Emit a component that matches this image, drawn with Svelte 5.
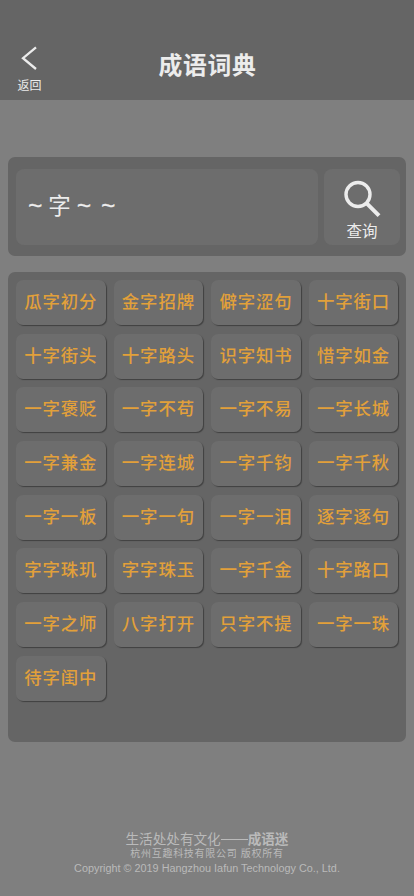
<script>
  let query = $state('~ 字 ~  ~')

  const idioms = [
    '瓜字初分', '金字招牌', '僻字涩句', '十字街口',
    '十字街头', '十字路头', '识字知书', '惜字如金',
    '一字褒贬', '一字不苟', '一字不易', '一字长城',
    '一字兼金', '一字连城', '一字千钧', '一字千秋',
    '一字一板', '一字一句', '一字一泪', '逐字逐句',
    '字字珠玑', '字字珠玉', '一字千金', '十字路口',
    '一字之师', '八字打开', '只字不提', '一字一珠',
    '待字闺中',
  ]
</script>

<div class="page">
  <header>
    <button class="back">
      <svg width="16" height="24" viewBox="0 0 16 24">
        <path d="M15 1.3 2 12.2 15 23" fill="none" stroke="currentColor" stroke-width="2.3" />
      </svg>
      <span>返回</span>
    </button>
    <h1>成语词典</h1>
  </header>

  <main>
    <section class="search">
      <div class="field">
        {#each query.split(/\s+/) as ch}
          <span class:tilde={ch === '~'}>{ch}</span>
        {/each}
      </div>
      <button class="submit">
        <svg width="38" height="38" viewBox="0 0 38 38">
          <circle cx="15" cy="14.5" r="12" fill="none" stroke="currentColor" stroke-width="3.4" />
          <path d="m23.2 22.8 12.8 12.8" fill="none" stroke="currentColor" stroke-width="4" />
        </svg>
        <span>查询</span>
      </button>
    </section>

    <section class="results">
      {#each idioms as idiom}
        <button class="idiom">{idiom}</button>
      {/each}
    </section>
  </main>

  <footer>
    <p class="slogan">生活处处有文化<i></i><b>成语迷</b></p>
    <p class="owner">杭州互趣科技有限公司 版权所有</p>
    <p class="copy">Copyright © 2019 Hangzhou Iafun Technology Co., Ltd.</p>
  </footer>
</div>

<style>
  :global(body) {
    background: #7f7f7f;
  }
  .page {
    display: flex;
    flex-direction: column;
    box-sizing: border-box;
    height: 896px;
    overflow: hidden;
    background: #7f7f7f;
    color: #ececec;
    font-family: 'Liberation Sans', 'Noto Sans CJK SC', sans-serif;
  }
  button {
    margin: 0;
    padding: 0;
    border: 0;
    background: none;
    color: inherit;
    font: inherit;
  }
  svg {
    display: block;
  }
  header {
    display: grid;
    grid-template-columns: 59px 1fr 59px;
    box-sizing: border-box;
    height: 100px;
    padding-top: 46px;
    background: #656565;
  }
  .back {
    display: flex;
    flex-direction: column;
    align-items: center;
    align-self: start;
  }
  .back svg {
    margin-right: 1px;
  }
  .back span {
    margin-top: 8px;
    font-size: 12px;
    line-height: 16px;
  }
  h1 {
    margin: 3px 0 0;
    padding-left: 1px;
    font-size: 23.8px;
    font-weight: 700;
    line-height: 34px;
    letter-spacing: 0.7px;
    text-align: center;
  }
  main {
    padding: 57px 8px 0;
  }
  .search {
    display: flex;
    gap: 6px;
    box-sizing: border-box;
    height: 99px;
    padding: 11.5px 6px 11.5px 8px;
    border-radius: 7px;
    background: #656565;
  }
  .field,
  .submit {
    border-radius: 8px;
    background: #6d6d6d;
  }
  .field {
    display: flex;
    flex: 1;
    align-items: center;
    box-sizing: border-box;
    padding: 0 0 5px 7px;
    font-size: 22.5px;
  }
  .field span {
    width: 24.4px;
    text-align: center;
  }
  .field .tilde {
    padding-top: 4px;
    font-size: 24px;
    -webkit-text-stroke: 0.4px currentColor;
  }
  .submit {
    display: flex;
    flex-direction: column;
    align-items: center;
    width: 76px;
    padding-top: 11.5px;
  }
  .submit span {
    margin-top: 3px;
    font-size: 15.5px;
    line-height: 22px;
  }
  .results {
    display: grid;
    grid-template-columns: repeat(4, 89.6px);
    grid-auto-rows: 45px;
    gap: 8.7px 8px;
    box-sizing: border-box;
    height: 470px;
    margin-top: 16px;
    padding: 8px;
    border-radius: 7px;
    background: #656565;
  }
  .idiom {
    border-radius: 7px;
    background: #6d6d6d;
    box-shadow: 1px 1px 1px #404040;
    color: #e2a03a;
    font-size: 17.4px;
    font-weight: 500;
    letter-spacing: 0.9px;
    line-height: 45px;
  }
  footer {
    margin-top: auto;
    padding-bottom: 21px;
    color: #bababa;
    text-align: center;
  }
  footer p {
    margin: 0;
  }
  .slogan {
    display: flex;
    align-items: center;
    justify-content: center;
    font-size: 13.6px;
    line-height: 15px;
  }
  .slogan i {
    width: 27px;
    height: 1px;
    background: currentColor;
  }
  .owner {
    font-size: 10px;
    line-height: 14px;
    letter-spacing: 0.7px;
  }
  .copy {
    font-size: 10.85px;
    line-height: 14px;
  }
</style>
